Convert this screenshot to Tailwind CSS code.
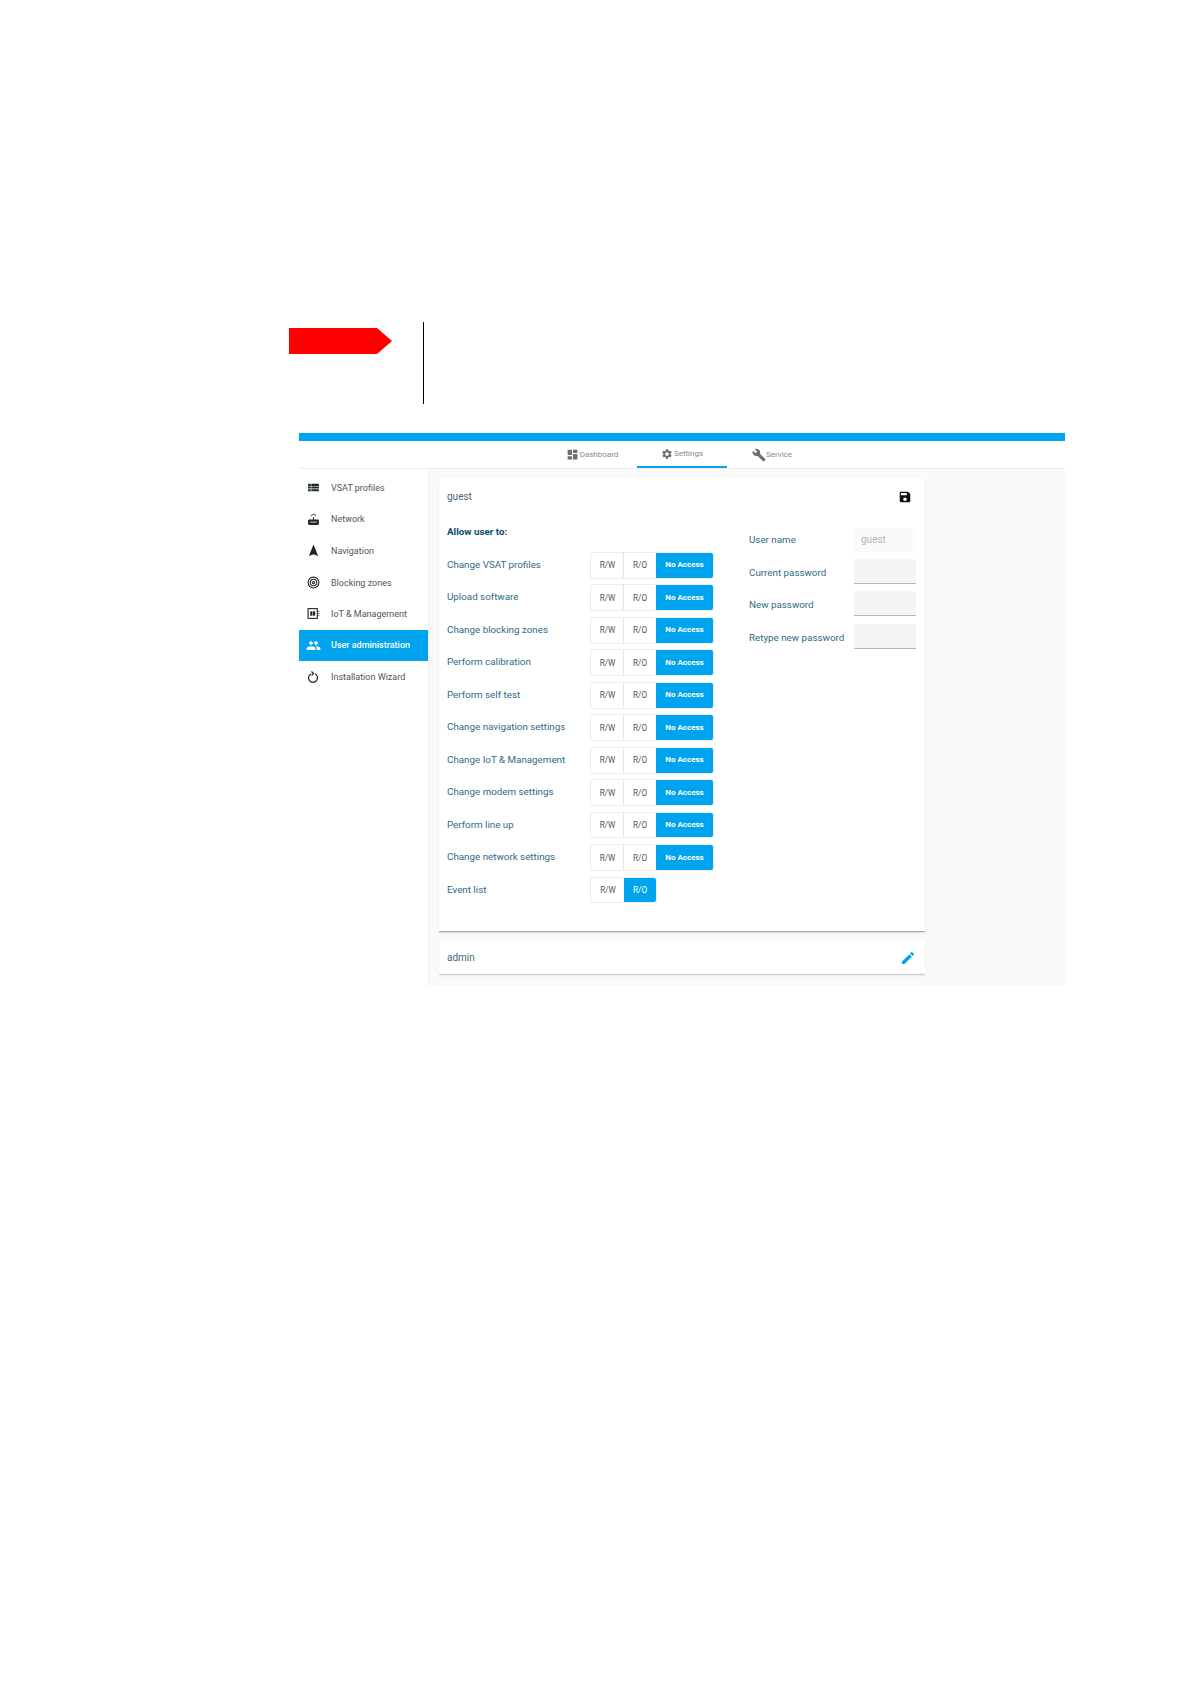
<!DOCTYPE html>
<html lang="en">
<head>
    <meta charset="UTF-8">
    <title>User administration</title>
    <script src="https://cdn.jsdelivr.net/npm/@tailwindcss/browser@4"></script>
</head>
<body class="bg-white font-['Roboto',sans-serif]">
    <div class="w-[1191px] h-[1684px] pt-[322px] overflow-hidden">
        <!-- warning marker -->
        <div class="ml-[289px] w-[135px] h-[82px] border-r border-black pt-[6px]">
            <svg width="103" height="26" viewBox="0 0 103 26" class="block"><polygon points="0,0 88,0 103,13 88,26 0,26" fill="#ff0000"/></svg>
        </div>

        <div class="ml-[299px] mt-[29px] w-[766px]">
            <div class="h-2 bg-[#00a3ee]"></div>

            <!-- tabs -->
            <div class="h-[28px] flex justify-center border-b border-[#eeeeee] text-[8px] text-[#8a8a8a]">
                <div class="w-[90px] h-[27px] flex items-center justify-center gap-[1px]">
                    <svg width="13" height="13" viewBox="0 0 24 24" fill="#6e6e6e"><path d="M3 13h8V3H3v10zm0 8h8v-6H3v6zm10 0h8V11h-8v10zm0-18v6h8V3h-8z"/></svg>
                    <span>Dashboard</span>
                </div>
                <div class="w-[90px] h-[27px] flex items-center justify-center gap-[1px] border-b-2 border-[#00a3ee]">
                    <svg width="12" height="12" viewBox="0 0 24 24" fill="#6e6e6e"><path d="M19.14 12.94c.04-.3.06-.61.06-.94 0-.32-.02-.64-.07-.94l2.03-1.58c.18-.14.23-.41.12-.61l-1.92-3.32c-.12-.22-.37-.29-.59-.22l-2.39.96c-.5-.38-1.03-.7-1.62-.94l-.36-2.54c-.04-.24-.24-.41-.48-.41h-3.84c-.24 0-.43.17-.47.41l-.36 2.54c-.59.24-1.13.57-1.62.94l-2.39-.96c-.22-.08-.47 0-.59.22L2.74 8.87c-.12.21-.08.47.12.61l2.03 1.58c-.05.3-.09.63-.09.94s.02.64.07.94l-2.03 1.58c-.18.14-.23.41-.12.61l1.92 3.32c.12.22.37.29.59.22l2.39-.96c.5.38 1.03.7 1.62.94l.36 2.54c.05.24.24.41.48.41h3.84c.24 0 .44-.17.47-.41l.36-2.54c.59-.24 1.13-.56 1.62-.94l2.39.96c.22.08.47 0 .59-.22l1.92-3.32c.12-.22.07-.47-.12-.61l-2.01-1.58zM12 15.6c-1.98 0-3.6-1.62-3.6-3.6s1.62-3.6 3.6-3.6 3.6 1.62 3.6 3.6-1.62 3.6-3.6 3.6z"/></svg>
                    <span>Settings</span>
                </div>
                <div class="w-[90px] h-[27px] flex items-center justify-center gap-[1px]">
                    <svg width="14" height="14" viewBox="0 0 24 24" fill="#6e6e6e"><path d="M22.7 19l-9.1-9.1c.9-2.3.4-5-1.5-6.9-2-2-5-2.4-7.4-1.3L9 6 6 9 1.6 4.7C.4 7.1.9 10.1 2.9 12.1c1.9 1.9 4.6 2.4 6.9 1.5l9.1 9.1c.4.4 1 .4 1.4 0l2.3-2.3c.5-.4.5-1.1.1-1.4z"/></svg>
                    <span class="-ml-[1px]">Service</span>
                </div>
            </div>

            <div class="flex h-[517px]">
                <!-- sidebar -->
                <nav class="w-[129px] pt-[3px] text-[9px] text-[#555555] bg-white">
                    <div class="h-[31.5px] flex items-center">
                        <div class="w-[32px] flex justify-center pr-[4px]"><svg width="13" height="13" viewBox="0 0 24 24" fill="#1c2b24"><path d="M2 5h5v4H2zM2 10h5v4H2zM2 15h5v4H2zM8 5h14v4H8zM8 10h14v4H8zM8 15h14v4H8z"/></svg></div>
                        <span class="mt-[2px]">VSAT profiles</span>
                    </div>
                    <div class="h-[31.5px] flex items-center">
                        <div class="w-[32px] flex justify-center pr-[4px]"><svg width="13" height="13" viewBox="0 0 24 24" fill="#222222"><path d="M2 14a2 2 0 0 1 2-2h7V8h2v4h7a2 2 0 0 1 2 2v6a2 2 0 0 1-2 2H4a2 2 0 0 1-2-2z"/><path d="M7 5l5-3 5 3" fill="none" stroke="#222222" stroke-width="1.6"/><rect x="6" y="16" width="12" height="1.5" fill="#ffffff"/></svg></div>
                        <span class="mt-[1px]">Network</span>
                    </div>
                    <div class="h-[31.5px] flex items-center">
                        <div class="w-[32px] flex justify-center pr-[4px]"><svg width="13" height="13" viewBox="0 0 24 24" fill="#222222"><path d="M12 1L3.5 22 12 19l8.5 3z"/></svg></div>
                        <span class="mt-[2px]">Navigation</span>
                    </div>
                    <div class="h-[31.5px] flex items-center">
                        <div class="w-[32px] flex justify-center pr-[4px]"><svg width="13" height="13" viewBox="0 0 24 24" fill="none" stroke="#222222" stroke-width="2"><circle cx="12" cy="12" r="10"/><circle cx="12" cy="12" r="6"/><circle cx="12" cy="12" r="2"/></svg></div>
                        <span class="mt-[2px]">Blocking zones</span>
                    </div>
                    <div class="h-[31.5px] flex items-center">
                        <div class="w-[32px] flex justify-center pr-[4px]"><svg width="13" height="13" viewBox="0 0 24 24" fill="none" stroke="#222222" stroke-width="2"><rect x="2" y="3" width="17" height="18"/><rect x="6" y="8" width="4" height="8" fill="#222222" stroke="none"/><rect x="11" y="8" width="4" height="8" fill="#222222" stroke="none"/><path d="M20 8h3M20 12h3M20 16h3" stroke-width="1.2"/></svg></div>
                        <span class="mt-[2px]">IoT &amp; Management</span>
                    </div>
                    <div class="h-[31.5px] flex items-center bg-[#00a3ee] text-white font-medium">
                        <div class="w-[32px] flex justify-center pr-[4px]"><svg width="15" height="15" viewBox="0 0 24 24" fill="#ffffff"><path d="M16 11c1.66 0 2.99-1.34 2.99-3S17.66 5 16 5c-1.66 0-3 1.34-3 3s1.34 3 3 3zm-8 0c1.66 0 2.99-1.34 2.99-3S9.66 5 8 5C6.34 5 5 6.34 5 8s1.34 3 3 3zm0 2c-2.33 0-7 1.17-7 3.5V19h14v-2.5c0-2.33-4.67-3.5-7-3.5zm8 0c-.29 0-.62.02-.97.05 1.16.84 1.97 1.97 1.97 3.45V19h6v-2.5c0-2.33-4.67-3.5-7-3.5z"/></svg></div>
                        <span>User administration</span>
                    </div>
                    <div class="h-[31.5px] flex items-center">
                        <div class="w-[32px] flex justify-center pr-[4px]"><svg width="12" height="12" viewBox="0 0 24 24" fill="none" stroke="#222222" stroke-width="2.4"><path d="M8 5.5A9 9 0 1 0 16 5.5"/><path d="M9 1l4 4-4 4" stroke-width="2.4"/></svg></div>
                        <span class="mt-[2px]">Installation Wizard</span>
                    </div>
                </nav>

                <!-- content -->
                <main class="flex-1 bg-[#fafafa] border-l border-[#eeeeee] pl-[10px] pt-[9px]">
                    <div class="w-[486px] h-[454px] bg-white rounded-t-[2px] border-b border-[#a8a8a8] shadow-[0_1px_2px_rgba(0,0,0,0.12)] px-2">
                        <div class="h-[38px] flex items-center justify-between pr-[5px]">
                            <span class="text-[10px] text-[#4a6675] -mt-[1px]">guest</span>
                            <svg width="14" height="14" viewBox="0 0 24 24" fill="#111111"><path d="M17 3H5c-1.11 0-2 .9-2 2v14c0 1.1.89 2 2 2h14c1.1 0 2-.9 2-2V7l-4-4zm-5 16c-1.66 0-3-1.34-3-3s1.34-3 3-3 3 1.34 3 3-1.34 3-3 3zm3-10H5V5h10v4z"/></svg>
                        </div>
                        <div class="flex">
                            <!-- permissions -->
                            <div class="w-[267px] mr-[35px] text-[9.8px] text-[#2f6a85]">
                                <div class="h-[26px] mt-[3px] mb-[7px] flex items-center font-bold text-[#0a4a6e]">Allow user to:</div>

                                <div class="h-[26.6px] mb-[5.9px] flex items-center">
                                    <span class="w-[143px]">Change VSAT profiles</span>
                                    <div class="flex h-full border border-[#ececec] rounded-[2px] text-[8.2px] text-[#555555]">
                                        <span class="w-[33px] flex items-center justify-center border-r border-[#e4e4e4] pl-[1px]">R/W</span>
                                        <span class="w-[32px] flex items-center justify-center">R/O</span>
                                        <span class="w-[57px] flex items-center justify-center bg-[#00a3ee] text-white font-bold text-[8px] rounded-r-[2px]">No Access</span>
                                    </div>
                                </div>
                                <div class="h-[26.6px] mb-[5.9px] flex items-center">
                                    <span class="w-[143px]">Upload software</span>
                                    <div class="flex h-full border border-[#ececec] rounded-[2px] text-[8.2px] text-[#555555]">
                                        <span class="w-[33px] flex items-center justify-center border-r border-[#e4e4e4] pl-[1px]">R/W</span>
                                        <span class="w-[32px] flex items-center justify-center">R/O</span>
                                        <span class="w-[57px] flex items-center justify-center bg-[#00a3ee] text-white font-bold text-[8px] rounded-r-[2px]">No Access</span>
                                    </div>
                                </div>
                                <div class="h-[26.6px] mb-[5.9px] flex items-center">
                                    <span class="w-[143px]">Change blocking zones</span>
                                    <div class="flex h-full border border-[#ececec] rounded-[2px] text-[8.2px] text-[#555555]">
                                        <span class="w-[33px] flex items-center justify-center border-r border-[#e4e4e4] pl-[1px]">R/W</span>
                                        <span class="w-[32px] flex items-center justify-center">R/O</span>
                                        <span class="w-[57px] flex items-center justify-center bg-[#00a3ee] text-white font-bold text-[8px] rounded-r-[2px]">No Access</span>
                                    </div>
                                </div>
                                <div class="h-[26.6px] mb-[5.9px] flex items-center">
                                    <span class="w-[143px]">Perform calibration</span>
                                    <div class="flex h-full border border-[#ececec] rounded-[2px] text-[8.2px] text-[#555555]">
                                        <span class="w-[33px] flex items-center justify-center border-r border-[#e4e4e4] pl-[1px]">R/W</span>
                                        <span class="w-[32px] flex items-center justify-center">R/O</span>
                                        <span class="w-[57px] flex items-center justify-center bg-[#00a3ee] text-white font-bold text-[8px] rounded-r-[2px]">No Access</span>
                                    </div>
                                </div>
                                <div class="h-[26.6px] mb-[5.9px] flex items-center">
                                    <span class="w-[143px]">Perform self test</span>
                                    <div class="flex h-full border border-[#ececec] rounded-[2px] text-[8.2px] text-[#555555]">
                                        <span class="w-[33px] flex items-center justify-center border-r border-[#e4e4e4] pl-[1px]">R/W</span>
                                        <span class="w-[32px] flex items-center justify-center">R/O</span>
                                        <span class="w-[57px] flex items-center justify-center bg-[#00a3ee] text-white font-bold text-[8px] rounded-r-[2px]">No Access</span>
                                    </div>
                                </div>
                                <div class="h-[26.6px] mb-[5.9px] flex items-center">
                                    <span class="w-[143px]">Change navigation settings</span>
                                    <div class="flex h-full border border-[#ececec] rounded-[2px] text-[8.2px] text-[#555555]">
                                        <span class="w-[33px] flex items-center justify-center border-r border-[#e4e4e4] pl-[1px]">R/W</span>
                                        <span class="w-[32px] flex items-center justify-center">R/O</span>
                                        <span class="w-[57px] flex items-center justify-center bg-[#00a3ee] text-white font-bold text-[8px] rounded-r-[2px]">No Access</span>
                                    </div>
                                </div>
                                <div class="h-[26.6px] mb-[5.9px] flex items-center">
                                    <span class="w-[143px]">Change IoT &amp; Management</span>
                                    <div class="flex h-full border border-[#ececec] rounded-[2px] text-[8.2px] text-[#555555]">
                                        <span class="w-[33px] flex items-center justify-center border-r border-[#e4e4e4] pl-[1px]">R/W</span>
                                        <span class="w-[32px] flex items-center justify-center">R/O</span>
                                        <span class="w-[57px] flex items-center justify-center bg-[#00a3ee] text-white font-bold text-[8px] rounded-r-[2px]">No Access</span>
                                    </div>
                                </div>
                                <div class="h-[26.6px] mb-[5.9px] flex items-center">
                                    <span class="w-[143px]">Change modem settings</span>
                                    <div class="flex h-full border border-[#ececec] rounded-[2px] text-[8.2px] text-[#555555]">
                                        <span class="w-[33px] flex items-center justify-center border-r border-[#e4e4e4] pl-[1px]">R/W</span>
                                        <span class="w-[32px] flex items-center justify-center">R/O</span>
                                        <span class="w-[57px] flex items-center justify-center bg-[#00a3ee] text-white font-bold text-[8px] rounded-r-[2px]">No Access</span>
                                    </div>
                                </div>
                                <div class="h-[26.6px] mb-[5.9px] flex items-center">
                                    <span class="w-[143px]">Perform line up</span>
                                    <div class="flex h-full border border-[#ececec] rounded-[2px] text-[8.2px] text-[#555555]">
                                        <span class="w-[33px] flex items-center justify-center border-r border-[#e4e4e4] pl-[1px]">R/W</span>
                                        <span class="w-[32px] flex items-center justify-center">R/O</span>
                                        <span class="w-[57px] flex items-center justify-center bg-[#00a3ee] text-white font-bold text-[8px] rounded-r-[2px]">No Access</span>
                                    </div>
                                </div>
                                <div class="h-[26.6px] mb-[5.9px] flex items-center">
                                    <span class="w-[143px]">Change network settings</span>
                                    <div class="flex h-full border border-[#ececec] rounded-[2px] text-[8.2px] text-[#555555]">
                                        <span class="w-[33px] flex items-center justify-center border-r border-[#e4e4e4] pl-[1px]">R/W</span>
                                        <span class="w-[32px] flex items-center justify-center">R/O</span>
                                        <span class="w-[57px] flex items-center justify-center bg-[#00a3ee] text-white font-bold text-[8px] rounded-r-[2px]">No Access</span>
                                    </div>
                                </div>
                                <div class="h-[26.6px] flex items-center">
                                    <span class="w-[143px]">Event list</span>
                                    <div class="flex h-full border border-[#ececec] rounded-[2px] text-[8.2px] text-[#555555]">
                                        <span class="w-[33px] flex items-center justify-center pl-[1px]">R/W</span>
                                        <span class="w-[32px] flex items-center justify-center bg-[#00a3ee] text-white rounded-r-[2px]">R/O</span>
                                    </div>
                                </div>
                            </div>

                            <!-- credentials -->
                            <div class="w-[168px] pt-[8px] text-[9.8px] text-[#2f6a85]">
                                <div class="h-[32.4px] flex items-center">
                                    <span class="w-[106px] mt-[1px]">User name</span>
                                    <input disabled value="guest" class="w-[61px] h-[24px] -mt-[1px] px-[6px] bg-[#fafafa] text-[10px] text-[#b5b5b5]">
                                </div>
                                <div class="h-[32.4px] flex items-center">
                                    <span class="w-[105px] mt-[1px]">Current password</span>
                                    <input type="password" class="w-[62px] h-[25px] -mt-[2px] bg-[#f5f5f5] border-b border-[#b5b5b5]">
                                </div>
                                <div class="h-[32.4px] flex items-center">
                                    <span class="w-[105px] mt-[1px]">New password</span>
                                    <input type="password" class="w-[62px] h-[25px] -mt-[2px] bg-[#f5f5f5] border-b border-[#b5b5b5]">
                                </div>
                                <div class="h-[32.4px] flex items-center">
                                    <span class="w-[105px] mt-[1px]">Retype new password</span>
                                    <input type="password" class="w-[62px] h-[25px] -mt-[2px] bg-[#f5f5f5] border-b border-[#b5b5b5]">
                                </div>
                            </div>
                        </div>
                    </div>

                    <div class="w-[486px] h-[34px] mt-[9px] bg-white rounded-[2px] border-b border-[#cccccc] shadow-[0_1px_2px_rgba(0,0,0,0.08)] pl-2 pr-[9px] flex items-center justify-between">
                        <span class="text-[10px] text-[#4a6675]">admin</span>
                        <svg width="16" height="16" viewBox="0 0 24 24" fill="#00a3ee"><path d="M3 17.25V21h3.75L17.81 9.94l-3.75-3.75L3 17.25zM20.71 7.04c.39-.39.39-1.02 0-1.41l-2.34-2.34c-.39-.39-1.02-.39-1.41 0l-1.83 1.83 3.75 3.75 1.83-1.83z"/></svg>
                    </div>
                </main>
            </div>
        </div>
    </div>
</body>
</html>
